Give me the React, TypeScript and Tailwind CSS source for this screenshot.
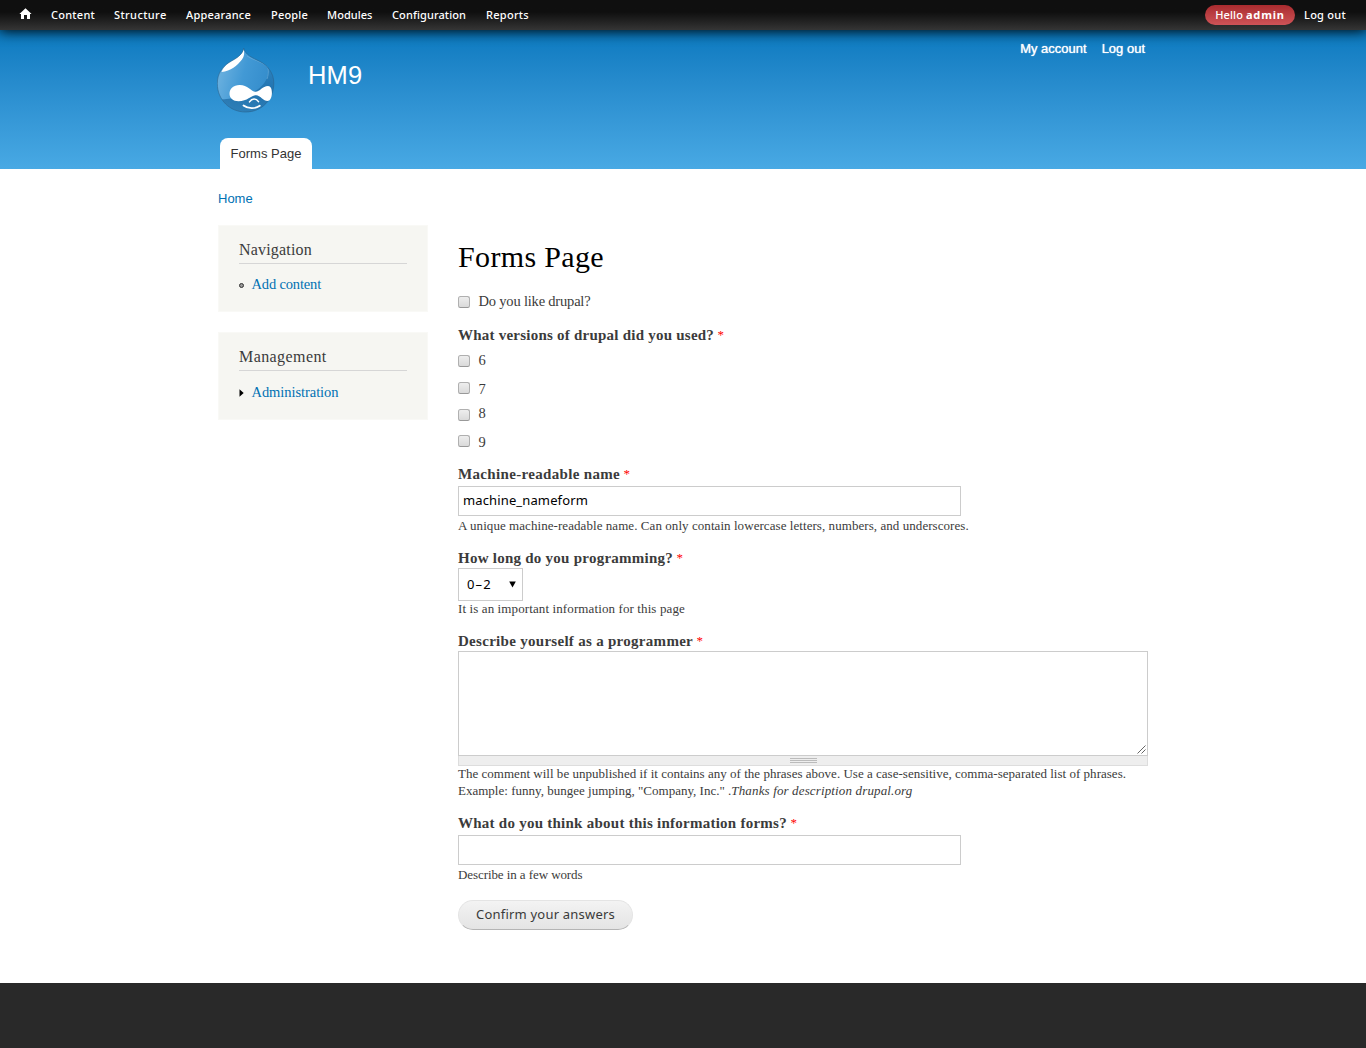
import type { ReactNode } from 'react';

const toolbarLinks = [
  { label: 'Content', width: 'w-[63px]', track: 'tracking-[0.25px]' },
  { label: 'Structure', width: 'w-[72px]', track: 'tracking-[0.4px]' },
  { label: 'Appearance', width: 'w-[85px]', track: 'tracking-[0.22px]' },
  { label: 'People', width: 'w-[56px]', track: 'tracking-[0.19px]' },
  { label: 'Modules', width: 'w-[65px]', track: 'tracking-[0.05px]' },
  { label: 'Configuration', width: 'w-[94px]', track: 'tracking-[0.1px]' },
  { label: 'Reports', width: 'w-[63px]', track: 'tracking-[0.28px]' },
];

const versions = [
  { label: '6', box: 'mt-[7px]', text: 'mt-[2px]' },
  { label: '7', box: 'mt-[7px]', text: 'mt-[4px]' },
  { label: '8', box: 'mt-[7px]', text: 'mt-[1px]' },
  { label: '9', box: 'mt-[6px]', text: 'mt-[3px]' },
];

function Druplicon() {
  return (
    <svg width="58" height="65" viewBox="0 0 58 65" className="block">
      <defs>
        <linearGradient id="body" x1="0" y1="0.3" x2="1" y2="0.6">
          <stop offset="0" stopColor="#6fb3e0" />
          <stop offset="0.45" stopColor="#4299d5" />
          <stop offset="1" stopColor="#3089c9" />
        </linearGradient>
        <linearGradient id="shade" x1="0" y1="0" x2="0" y2="1">
          <stop offset="0" stopColor="#2a80be" />
          <stop offset="0.6" stopColor="#1d6ca6" />
          <stop offset="1" stopColor="#2a7ab2" />
        </linearGradient>
        <clipPath id="drop">
          <path d="M26.7 .3C25.5 7 19 10.500 12 14.500C5 19 .3 26 .3 35.500C.3 52 13 64 28.500 64C45 64 56.800 51.500 56.800 35C56.800 24.500 50 17 43 13.500C35 9.500 28.500 7 26.700 .3Z" />
        </clipPath>
      </defs>
      <g clipPath="url(#drop)">
        <rect width="58" height="65" fill="url(#body)" />
        <path d="M50 17C54 28 47 38 38 43C27 49 15 51 3 51.500L6 65H58V24Z" fill="url(#shade)" opacity=".8" />
        <path d="M26.800 1C27.500 5 27.500 8 25 11.500C20 18 14 23 4.500 24C7 18 12 14.500 17 11.600C22 8.800 25.500 6 26.800 1Z" fill="#fff" />
        <path d="M30 8C38 13 47 14 51 20C52 24 51 28 50 31" fill="none" stroke="#7cb9e3" strokeWidth="1" opacity=".5" />
      </g>
      <path d="M26.7 .3C25.5 7 19 10.500 12 14.500C5 19 .3 26 .3 35.500C.3 52 13 64 28.500 64C45 64 56.800 51.500 56.800 35C56.800 24.500 50 17 43 13.500C35 9.500 28.500 7 26.700 .3Z" fill="none" stroke="#27618c" strokeWidth=".9" opacity=".65" />
      <path d="M22.500 37C30 36.700 34.500 43.700 38.500 43.700C43 43.700 45.500 38 51 38C53.800 38 54.900 41 54.900 45C54.900 49.500 53 53 50.500 53C46.500 53 43 47.200 39.200 47.200C34 47.200 30.500 53.200 21.500 53.200C16 53.200 12.500 50 12.500 45.700C12.500 40.700 16.500 37.200 22.500 37Z" fill="#fff" />
      <path d="M32.500 53.900C35 50.300 39 50.100 41.500 53.600" fill="none" stroke="#fff" strokeWidth="1.500" strokeLinecap="round" />
      <path d="M26.500 57.500C31 61 38.500 61 42.800 57.800" fill="none" stroke="#fff" strokeWidth="1.800" strokeLinecap="round" />
    </svg>
  );
}

function Checkbox({ className }: { className: string }) {
  return (
    <span
      className={`block size-3 shrink-0 rounded-[2.500px] border border-[#b0b0b0] border-b-[#999999] bg-linear-to-b from-[#eeeeee] to-[#dadada] ${className}`}
    />
  );
}

function Label({ children, className }: { children: ReactNode; className: string }) {
  return (
    <div className={`flex h-5 text-[15px] leading-5 font-bold whitespace-nowrap text-[#3b3b3b] ${className}`}>
      {children}
      <span className="ml-[3.500px] text-[13px] leading-5 font-normal tracking-normal text-[#ff0000]">*</span>
    </div>
  );
}

function Block({ title, track, className, children }: { title: string; track: string; className: string; children: ReactNode }) {
  return (
    <section className={`w-[210px] border border-[#f9f9f6] bg-[#f6f6f2] px-5 ${className}`}>
      <h2 className={`h-[38px] border-b border-[#d6d6d6] pt-[14px] text-[16px] leading-5 text-[#3b3b3b] ${track}`}>{title}</h2>
      {children}
    </section>
  );
}

export default function App() {
  return (
    <div className="flex h-[1048px] w-[1366px] flex-col overflow-hidden bg-white font-['Liberation_Serif',serif] text-[#3b3b3b]">
      <nav className="z-10 flex h-[30px] shrink-0 items-center bg-linear-to-b from-[#0f0f0f] from-40% to-[#353535] font-['Noto_Sans',sans-serif] text-[11px] leading-[30px] font-medium whitespace-nowrap text-white shadow-[0_0_14px_1px_#000]">
        <a className="ml-[19px] block w-8">
          <svg width="13" height="12" viewBox="0 0 13 12" className="-mt-[2px] block">
            <path d="M6.500 .2L12.600 6H11V11H8V7H5V11H2V6H.4Z" fill="#fff" />
          </svg>
        </a>
        {toolbarLinks.map((l) => (
          <a key={l.label} className={`block ${l.width} ${l.track}`}>{l.label}</a>
        ))}
        <a className="ml-auto flex h-5 w-[90px] items-center justify-center rounded-full bg-linear-to-b from-[#a92b2f] to-[#cf5357] font-medium">
          <span className="tracking-[0.1px]">Hello</span>
          <b className="ml-[3px] font-bold tracking-[0.8px]">admin</b>
        </a>
        <a className="mr-[19px] ml-[9px] block w-[43px] tracking-[0.26px]">Log out</a>
      </nav>

      <header className="h-[139px] shrink-0 bg-linear-to-b from-[#0779bf] to-[#48a9e4] font-['Liberation_Sans',sans-serif]">
        <div className="flex h-[108px] pl-[217px] text-white">
          <div className="mt-[19px] w-[91px] -translate-y-px"><Druplicon /></div>
          <h1 className="mt-[30px] text-[25.500px] leading-[30px] tracking-[0.2px]">HM9</h1>
          <div className="mt-[10px] mr-[221px] ml-auto flex gap-[15px] text-[13px] leading-[18px] [text-shadow:0_0_1px_#ffffff]">
            <a>My account</a>
            <a>Log out</a>
          </div>
        </div>
        <div className="ml-[220px] h-[31px] w-[92px] rounded-t-[8px] bg-white text-center text-[13px] leading-[31px] text-[#333333]">Forms Page</div>
      </header>

      <div className="h-14 shrink-0 pt-[21px] pl-[218px] font-['Liberation_Sans',sans-serif] text-[13px] leading-[18px] text-[#0071b3]">Home</div>

      <div className="flex h-[758px] shrink-0 pl-[218px]">
        <aside className="w-[240px]">
          <Block title="Navigation" track="tracking-[0.19px]" className="h-[87px]">
            <div className="mt-[10px] flex items-center text-[14.500px] leading-5 tracking-[-0.16px] text-[#0071b3]">
              <span className="mt-[3px] mr-[7.500px] block size-[5px] rounded-full border-[1.500px] border-[#333333] bg-[#999999]" />
              Add content
            </div>
          </Block>
          <Block title="Management" track="tracking-[0.42px]" className="mt-5 h-[88px]">
            <div className="mt-[11px] flex items-center text-[14.500px] leading-5 tracking-[-0.06px] text-[#0071b3]">
              <svg width="5" height="8" viewBox="0 0 5 8" className="mt-[2px] mr-[7.500px] block"><path d="M.5 .3L4.700 4L.5 7.700Z" fill="#000" /></svg>
              Administration
            </div>
          </Block>
        </aside>

        <main className="w-[690px]">
          <h1 className="mt-[14px] text-[30px] leading-9 tracking-[0.35px] text-black">Forms Page</h1>

          <div className="mt-4 flex h-5">
            <Checkbox className="mt-[5px]" />
            <span className="ml-[8.500px] text-[14.500px] leading-5 tracking-[-0.19px]">Do you like drupal?</span>
          </div>

          <Label className="mt-[14px] tracking-[0.23px]">What versions of drupal did you used?</Label>
          <div className="mt-[3px] h-[108px]">
            {versions.map((v) => (
              <div key={v.label} className="flex h-[27px]">
                <Checkbox className={v.box} />
                <span className={`ml-[8.500px] h-5 text-[14.500px] leading-5 ${v.text}`}>{v.label}</span>
              </div>
            ))}
          </div>

          <Label className="mt-2 tracking-[0.33px]">Machine-readable name</Label>
          <div className="mt-[2px] h-[30px] w-[503px] border border-[#cccccc] pl-[4px] font-['Noto_Sans',sans-serif] text-[13px] leading-[26px] tracking-[0.13px] text-black">machine_nameform</div>
          <p className="mt-px text-[13px] leading-[17px] tracking-[0.062px] whitespace-nowrap">A unique machine-readable name. Can only contain lowercase letters, numbers, and underscores.</p>

          <Label className="mt-[14px] tracking-[0.25px]">How long do you programming?</Label>
          <div className="flex h-[33px] w-[65px] border border-[#cccccc] pl-2 font-['Noto_Sans',sans-serif] text-[13px] leading-[31px] tracking-[1.100px] text-black">
            0–2
            <svg width="7" height="7" viewBox="0 0 7 7" className="mt-[12px] mr-[6px] ml-auto block"><path d="M.2 .5H6.800L3.500 6.500Z" fill="#000" /></svg>
          </div>
          <p className="-mt-px text-[13px] leading-[17px] tracking-[0.11px]">It is an important information for this page</p>

          <Label className="mt-[14px] tracking-[0.29px]">Describe yourself as a programmer</Label>
          <div className="flex h-[105px] w-[690px] items-end justify-end border border-[#cccccc] p-px">
            <svg width="9" height="9" viewBox="0 0 9 9" className="block"><path d="M.5 8.500L8.500 .5M4.500 8.500L8.500 4.500" stroke="#555" strokeWidth=".9" /></svg>
          </div>
          <div className="flex h-[10px] w-[690px] justify-center border border-t-0 border-[#dddddd] bg-[#eeeeee] pt-[2px] pl-px">
            <div className="h-[5px] w-[27px] border-y border-[#bbbbbb] pt-px"><div className="h-px bg-[#bbbbbb]" /></div>
          </div>
          <p className="-mt-px text-[13px] leading-[17px] whitespace-nowrap">
            <span className="tracking-[0.018px]">The comment will be unpublished if it contains any of the phrases above. Use a case-sensitive, comma-separated list of phrases.</span>
            <br />
            <span className="tracking-[0.01px]">Example: funny, bungee jumping, "Company, Inc." .</span>
            <em className="tracking-[0.14px]">Thanks for description drupal.org</em>
          </p>

          <Label className="mt-[14px] tracking-[0.25px]">What do you think about this information forms?</Label>
          <div className="mt-[2px] h-[30px] w-[503px] border border-[#cccccc]" />
          <p className="mt-px text-[13px] leading-[17px] tracking-[-0.08px]">Describe in a few words</p>

          <button className="mt-[17px] block h-[30px] w-[175px] rounded-full border border-[#e4e4e4] border-b-[#b4b4b4] bg-linear-to-b from-[#f3f3f3] to-[#e4e4e4] pb-[2px] text-center font-['Noto_Sans',sans-serif] text-[13px] leading-[26px] tracking-[0.21px] whitespace-nowrap text-[#3a3a3a]">Confirm your answers</button>
        </main>
      </div>

      <footer className="flex-1 bg-[#292929]" />
    </div>
  );
}
